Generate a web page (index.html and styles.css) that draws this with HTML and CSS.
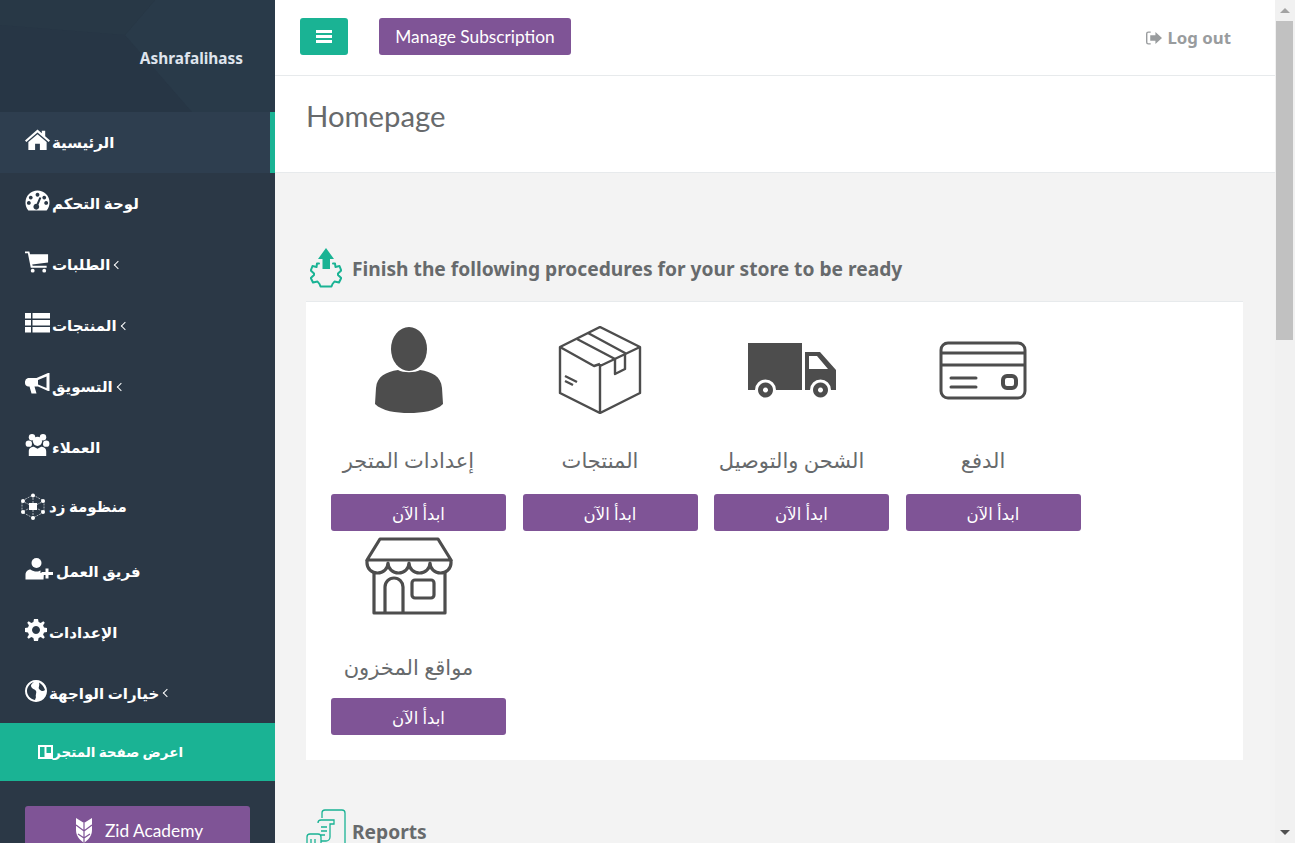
FILE: index.html
```html
<!DOCTYPE html>
<html lang="en">
<head>
  <meta charset="UTF-8" />
  <title>Homepage</title>
  <link rel="stylesheet" href="styles.css">
</head>
<body>
<div class="app">
  <aside class="sidebar">
    <div class="profile">
      <svg class="profile-bg" viewBox="0 0 275 112" preserveAspectRatio="none">
        <polygon points="125,35 155,0 275,0 275,112 192,112" fill="#293a49"/>
        <polygon points="0,0 155,0 125,35 0,25" fill="#283846"/>
      </svg>
      <span class="profile-name">Ashrafalihass</span>
    </div>
    <nav class="menu">
      <a class="menu-item active">
        <svg class="ico" viewBox="0 0 26 22"><path d="M13 0 L17.500 4 V1.500 H21 V7.200 L26 11.600 L24.600 13.200 L13 3.200 L1.400 13.200 L0 11.600Z M13 5 L22.500 13 V21.500 H15.500 V15 H10.500 V21.500 H3.500 V13Z"/></svg>
        <span>الرئيسية</span>
      </a>
      <a class="menu-item">
        <svg class="ico" viewBox="0 0 26 22"><path fill-rule="evenodd" d="M13 0 A12.500 12.500 0 0 1 25.500 12.500 C25.500 15.500 24.500 18.500 22.500 21 H3.500 C1.500 18.500 .5 15.500 .5 12.500 A12.500 12.500 0 0 1 13 0Z M13 2.500 a2 2 0 1 0 .01 0Z M6 5.500 a2 2 0 1 0 .01 0Z M20 5.500 a2 2 0 1 0 .01 0Z M4 11 a2 2 0 1 0 .01 0Z M22 11 a2 2 0 1 0 .01 0Z M15 7 L12 14 a3 3 0 1 0 2 1 L17 7.500Z"/></svg>
        <span>لوحة التحكم</span>
      </a>
      <a class="menu-item">
        <svg class="ico" viewBox="0 0 26 22"><path d="M0 0 H4.500 L5.200 3 H24 V11.500 L7.500 13.500 L8 15 H22.500 V17 H6 L3 2 H0Z"/><circle cx="8" cy="20" r="2"/><circle cx="20" cy="20" r="2"/></svg>
        <span>الطلبات</span><span class="chev"></span>
      </a>
      <a class="menu-item">
        <svg class="ico" viewBox="0 0 25 20"><path d="M0 0 H6 V5.500 H0Z M7.500 0 H25 V5.500 H7.500Z M0 7 H6 V12.500 H0Z M7.500 7 H25 V12.500 H7.500Z M0 14 H6 V19.500 H0Z M7.500 14 H25 V19.500 H7.500Z"/></svg>
        <span>المنتجات</span><span class="chev"></span>
      </a>
      <a class="menu-item">
        <svg class="ico" viewBox="0 0 25 22"><path d="M23 0 H24.500 V18 H23 L13 13.500 H9.500 L11.500 20.500 H6.500 L4.500 13.500 H3 A3.500 3.500 0 0 1 0 10 V8.500 A4 4 0 0 1 3 5 H11.500Z M21.500 3.500 L13 7 V11.500 L21.500 15Z"/></svg>
        <span>التسويق</span><span class="chev"></span>
      </a>
      <a class="menu-item">
        <svg class="ico" viewBox="0 0 26 24"><circle cx="7" cy="3.500" r="3.500"/><circle cx="19" cy="3.500" r="3.500"/><circle cx="13" cy="8" r="5"/><circle cx="3.500" cy="10.500" r="3.500"/><circle cx="22.500" cy="10.500" r="3.500"/><path d="M3.500 24 V19 C3.500 15 7 14 9 14 L13 16 L17 14 C19 14 22.500 15 22.500 19 V24Z"/></svg>
        <span>العملاء</span>
      </a>
      <a class="menu-item menu-item-zid">
        <svg class="ico-zid" viewBox="0 0 26 27">
          <g fill="none" stroke="#a9b0b7" stroke-width="1" stroke-dasharray="2 1"><polygon points="13,2 24,8 24,19 13,25 2,19 2,8"/><path d="M13 2 V25 M2 8 L24 19 M24 8 L2 19"/></g>
          <g fill="#fff"><circle cx="13" cy="2.500" r="2"/><circle cx="3" cy="8" r="2"/><circle cx="23" cy="8" r="2"/><circle cx="3" cy="19" r="2"/><circle cx="23" cy="19" r="2"/><circle cx="13" cy="25" r="2"/><rect x="9" y="10" width="8" height="7"/></g>
        </svg>
        <span>منظومة زد</span>
      </a>
      <a class="menu-item">
        <svg class="ico ico-lg" viewBox="0 0 28 22"><circle cx="11" cy="5" r="5"/><path d="M0 21.500 V17 C0 13 3 11.500 5 11.500 C7 13 9 13.500 11 13.500 C13 13.500 14 13 15 12.500 V15 H18.500 L18 21.500Z"/><path d="M20 10.500 H23 V14 H27.500 V17 H23 V20.500 H20 V17 H16 V14 H20Z"/></svg>
        <span>فريق العمل</span>
      </a>
      <a class="menu-item">
        <svg class="ico ico-sm" viewBox="0 0 22 22"><path fill-rule="evenodd" d="M9 0 H13 L13.600 3 L15.700 3.900 L18.300 2.200 L19.800 3.700 L18.100 6.300 L19 8.400 L22 9 V13 L19 13.600 L18.100 15.700 L19.800 18.300 L18.300 19.800 L15.700 18.100 L13.600 19 L13 22 H9 L8.400 19 L6.300 18.100 L3.700 19.800 L2.200 18.300 L3.900 15.700 L3 13.600 L0 13 V9 L3 8.400 L3.900 6.300 L2.200 3.700 L3.700 2.200 L6.300 3.900 L8.400 3 Z M11 7 a4 4 0 1 0 .01 0Z"/></svg>
        <span>الإعدادات</span>
      </a>
      <a class="menu-item">
        <svg class="ico ico-sm" viewBox="0 0 22 22"><path fill-rule="evenodd" d="M11 0 a11 11 0 1 0 .01 0Z M9 2 C6 4 5 6 7 8 C9 10 10 9 11 11 C12 13 10 15 11 17 L10 20 C5 19 2 15 2 11 C2 7 5 3 9 2Z M14 2.500 C17 4 19 7 20 10 C18 12 16 11 14 9 C13 7 15 6 14 2.500Z"/></svg>
        <span>خيارات الواجهة</span><span class="chev"></span>
      </a>
    </nav>
    <a class="store-link">
      <svg class="ico-store" viewBox="0 0 15 14"><path fill-rule="evenodd" d="M0 0 H15 V14 H0Z M2 2 V12 H6.500 V2Z M8.500 2 V8 H13 V2Z"/></svg>
      <span>اعرض صفحة المتجر</span>
    </a>
    <a class="academy">
      <svg class="academy-logo" viewBox="0 0 16 25"><path d="M0 0 L8 5 L16 0 V12 C16 18 12 22 8 25 C4 22 0 18 0 12Z"/><path class="logo-cut" d="M8 5 V25 M0 7 L8 13 L16 7 M2 16 L8 20 L14 16"/></svg>
      <span>Zid Academy</span>
    </a>
  </aside>

  <main class="main">
    <header class="topbar">
      <button class="btn-menu"><svg class="bars" viewBox="0 0 16 13"><path d="M0 0 H16 V3 H0Z M0 5 H16 V8 H0Z M0 10 H16 V13 H0Z"/></svg></button>
      <a class="btn-purple btn-sub">Manage Subscription</a>
      <a class="logout">
        <svg class="logout-ico" viewBox="0 0 17 14"><path d="M5 0 H2.500 A2.500 2.500 0 0 0 0 2.500 V11.500 A2.500 2.500 0 0 0 2.500 14 H5 V12.500 H2.500 A1 1 0 0 1 1.500 11.500 V2.500 A1 1 0 0 1 2.500 1.500 H5Z M10 .5 L17 7 L10 13.500 V10 H4.500 V4 H10Z"/></svg>
        <span>Log out</span>
      </a>
    </header>
    <section class="page-title"><h1>Homepage</h1></section>

    <div class="content">
      <h2 class="section-head">
        <svg class="head-ico" viewBox="0 0 32 40">
          <path d="M9 15.500 H7 L6.500 19 L2.500 18 L.8 22.500 L4 25.500 V27 L.8 30 L3 34.500 L7.500 33.500 L9.500 36 L10.500 38.500 H21.500 L22.500 36 L24.500 33.500 L29 34.500 L31.200 30 L28 27 V25.500 L31.200 22.500 L29.500 18 L25.500 19 L25 15.500 H23" fill="none" stroke="#1ab394" stroke-width="2" stroke-linejoin="round" stroke-linecap="round"/>
          <path d="M16 0 L24 11 H20 V21 H12.500 V11 H8Z" fill="#1ab394"/>
        </svg>
        <span>Finish the following procedures for your store to be ready</span>
      </h2>

      <div class="card">
        <div class="task">
          <div class="task-icon">
            <svg width="70" height="88" viewBox="0 0 70 88"><ellipse cx="35" cy="23" rx="18" ry="22" fill="#4d4d4d"/><path d="M24 44 C29 47 41 47 46 44 C58 46 67 50 68 62 L69 78 C62 85 48 87 35 87 C22 87 8 85 1 78 L2 62 C3 50 12 46 24 44Z" fill="#4d4d4d"/></svg>
          </div>
          <div class="task-name">إعدادات المتجر</div>
          <a class="btn-purple btn-start">ابدأ الآن</a>
        </div>
        <div class="task">
          <div class="task-icon">
            <svg width="84" height="88" viewBox="0 0 84 88" fill="none" stroke="#4d4d4d" stroke-width="2.400" stroke-linejoin="round"><path d="M2 21 L42 1 L82 21 V67 L42 87 L2 67Z"/><path d="M2 21 L36 40 L42 38 M42 38 V87 M42 40 L82 21"/><path d="M19 13 L57 33 V48 L67 43 V27 L30 7"/><path d="M7 56 L19 62 M7 61 L15 65" transform="translate(0 -6)"/></svg>
          </div>
          <div class="task-name">المنتجات</div>
          <a class="btn-purple btn-start">ابدأ الآن</a>
        </div>
        <div class="task">
          <div class="task-icon task-icon-truck">
            <svg width="90" height="56" viewBox="0 0 90 56" fill="#4d4d4d"><path d="M1 0 H55 V47 H29 A10.500 10.500 0 0 0 8 47 H1Z"/><path fill-rule="evenodd" d="M58 9 H73 L89 27 V47 H84 A10.500 10.500 0 0 0 63 47 H58Z M62 13 V26 H81 L70 13Z"/><path fill-rule="evenodd" d="M18.500 39.500 a7.500 7.500 0 1 0 .01 0Z M18.500 44.500 a2.500 2.500 0 1 1 -.01 0Z M73.500 39.500 a7.500 7.500 0 1 0 .01 0Z M73.500 44.500 a2.500 2.500 0 1 1 -.01 0Z"/></svg>
          </div>
          <div class="task-name">الشحن والتوصيل</div>
          <a class="btn-purple btn-start">ابدأ الآن</a>
        </div>
        <div class="task">
          <div class="task-icon task-icon-card">
            <svg width="88" height="60" viewBox="0 0 88 60" fill="none" stroke="#4d4d4d" stroke-width="3"><rect x="2" y="2" width="84" height="55" rx="7"/><path d="M2 12 H86 M2 24 H86"/><path d="M12 37 H37 M12 46 H37" stroke-linecap="round"/><rect x="64" y="35" width="13" height="12" rx="4" stroke-width="4"/></svg>
          </div>
          <div class="task-name">الدفع</div>
          <a class="btn-purple btn-start">ابدأ الآن</a>
        </div>
        <div class="task">
          <div class="task-icon task-icon-store">
            <svg width="88" height="78" viewBox="0 0 88 78" fill="none" stroke="#4d4d4d" stroke-width="3.200" stroke-linejoin="round"><path d="M15 2 H73 L86 23 H2Z"/><path d="M2 23 V26 A10.500 10 0 0 0 23 26 A10.500 10 0 0 0 44 26 A10.500 10 0 0 0 65 26 A10.500 10 0 0 0 86 26 V23"/><path d="M9 35 V76 H80 V35"/><path d="M20 76 V50 A9 9 0 0 1 38 50 V76"/><rect x="47" y="43" width="22" height="18" rx="3"/></svg>
          </div>
          <div class="task-name">مواقع المخزون</div>
          <a class="btn-purple btn-start">ابدأ الآن</a>
        </div>
      </div>

      <h2 class="section-head section-reports">
        <svg class="head-ico-rep" viewBox="0 0 42 44" fill="none" stroke="#1ab394" stroke-width="1.300"><path d="M17 9 V4 A3 3 0 0 1 20 1 H37 A3 3 0 0 1 40 4 V44"/><path d="M13 14 A3 3 0 0 1 16 11 H29 V15 H25 V28 A4 4 0 0 1 21 32 H16"/><path d="M16 18 H22 M16 22 H22 M16 26 H20"/><path d="M2 44 V28 A3 3 0 0 1 5 25 H13 A3 3 0 0 1 16 28 V44"/><path d="M6 30 V36 M10 30 V36"/></svg>
        <span>Reports</span>
      </h2>
    </div>
  </main>

  <div class="scrollbar">
    <div class="sb-arrow sb-up"></div>
    <div class="sb-track"><div class="sb-thumb"></div></div>
    <div class="sb-arrow sb-down"></div>
  </div>
</div>
</body>
</html>
```

FILE: styles.css
```css
* {
  box-sizing: border-box;
}
html, body {
  margin: 0;
  height: 100%;
  overflow: hidden;
}
body {
  font-family: Lato, "DejaVu Sans", sans-serif;
  color: #676a6c;
  background-color: #f3f3f3;
}
.app {
  display: flex;
  height: 843px;
  overflow: hidden;
}

/* sidebar */
.sidebar {
  width: 275px;
  flex: none;
  background-color: #2b3846;
}
.profile {
  position: relative;
  height: 112px;
  display: flex;
  justify-content: flex-end;
  padding: 49px 32px 0 0;
  background-color: #273645;
}
.profile-bg {
  position: absolute;
  left: 0;
  top: 0;
  width: 100%;
  height: 100%;
}
.profile-name {
  position: relative;
  font-family: "Noto Sans", sans-serif;
  font-size: 15.4px;
  font-weight: 700;
  line-height: 20px;
  color: #dfe4ed;
}
.menu-item {
  display: flex;
  align-items: center;
  height: 61px;
  padding-left: 25px;
  gap: 2px;
  font-size: 15px;
  font-weight: 700;
  color: #fff;
}
.menu-item:last-child {
  height: 60px;
}
.menu-item.active {
  background-color: #2e3e4f;
  border-right: 5px solid #1ab394;
}
.menu-item-zid {
  height: 63px;
  padding-left: 20px;
  padding-bottom: 6px;
}
.ico {
  width: 25px;
  height: 22px;
  fill: #fff;
  margin-top: -5px;
}
.ico-sm {
  width: 22px;
}
.ico-lg {
  width: 29px;
}
.ico-zid {
  width: 26px;
  height: 27px;
  margin-right: 1px;
}
.chev {
  width: 6px;
  height: 6px;
  margin-left: 3px;
  border-left: 1.5px solid #fff;
  border-bottom: 1.5px solid #fff;
  transform: rotate(45deg);
}
.store-link {
  display: flex;
  align-items: center;
  height: 58px;
  padding-left: 38px;
  background-color: #1ab394;
  font-size: 13.5px;
  font-weight: 700;
  color: #fff;
}
.ico-store {
  width: 15px;
  height: 14px;
  fill: #fff;
}
.academy {
  display: flex;
  align-items: center;
  gap: 13px;
  height: 48px;
  margin: 25px 25px 0;
  padding-left: 51px;
  border-radius: 3px;
  background-color: #7f5496;
  color: #fff;
  font-size: 17.3px;
}
.academy-logo {
  width: 16px;
  height: 25px;
  fill: #fff;
}
.logo-cut {
  fill: none;
  stroke: #7f5496;
  stroke-width: 1.2;
}

/* main column */
.main {
  flex: 1;
  min-width: 0;
}
.topbar {
  display: flex;
  align-items: center;
  height: 76px;
  padding: 0 44px 2px 25px;
  background-color: #fff;
  border-bottom: 1px solid #e7eaec;
}
.btn-menu {
  width: 48px;
  height: 37px;
  padding: 0;
  border: 0;
  border-radius: 3px;
  background-color: #1ab394;
  display: flex;
  align-items: center;
  justify-content: center;
}
.bars {
  width: 16px;
  height: 13px;
  fill: #fff;
}
.btn-purple {
  display: flex;
  align-items: center;
  justify-content: center;
  height: 37px;
  border-radius: 3px;
  background-color: #7f5496;
  color: #fff;
}
.btn-sub {
  width: 192px;
  margin-left: 31px;
  font-size: 17.3px;
}
.logout {
  margin-left: auto;
  margin-top: 2px;
  display: flex;
  align-items: center;
  gap: 5px;
  font-family: "Noto Sans", sans-serif;
  font-size: 16.8px;
  font-weight: 700;
  color: #999c9e;
}
.logout-ico {
  width: 16px;
  height: 14px;
  fill: #999c9e;
}
.page-title {
  height: 97px;
  padding: 20px 31px 0;
  background-color: #fff;
  border-bottom: 1px solid #e7eaec;
}
.page-title h1 {
  margin: 0;
  font-size: 29.3px;
  font-weight: 400;
  line-height: 40px;
}
.content {
  padding: 75px 32px 0 31px;
}
.section-head {
  display: flex;
  align-items: center;
  gap: 10px;
  height: 40px;
  margin: 0 0 13px;
  font-family: "Noto Sans", sans-serif;
  font-size: 19.2px;
  font-weight: 700;
}
.head-ico {
  width: 32px;
  height: 40px;
  margin-left: 4px;
}
.head-ico-rep {
  width: 42px;
  height: 44px;
  margin-left: -1px;
  margin-right: -5px;
  flex: none;
}
.section-reports {
  margin-top: 51px;
}

/* task card */
.card {
  display: grid;
  grid-template-columns: repeat(4, 175px);
  column-gap: 16.5px;
  padding: 0 25px 25px;
  background-color: #fff;
  border-top: 1px solid #e7eaec;
}
.task {
  display: flex;
  flex-direction: column;
}
.task-icon {
  display: flex;
  justify-content: center;
  width: 155px;
  height: 138px;
  padding-top: 24px;
}
.task-icon svg {
  flex: none;
}
.task-icon-truck {
  padding-top: 41px;
}
.task-icon-card {
  padding-top: 39px;
}
.task-icon-store {
  height: 116px;
  padding-top: 6px;
}
.task-name {
  width: 155px;
  height: 54px;
  font-size: 21px;
  line-height: 40px;
  text-align: center;
  white-space: nowrap;
}
.task-icon-store + .task-name {
  height: 51px;
}
.btn-start {
  width: 175px;
  padding-top: 3px;
  font-size: 16.5px;
}

/* page scrollbar */
.scrollbar {
  width: 20px;
  flex: none;
  display: flex;
  flex-direction: column;
  background-color: #f1f1f1;
}
.sb-arrow {
  height: 21px;
  display: flex;
  align-items: center;
  justify-content: center;
}
.sb-up::before {
  content: "";
  border: 5px solid transparent;
  border-top: 0;
  border-bottom: 5px solid #a3a3a3;
}
.sb-down::before {
  content: "";
  border: 5px solid transparent;
  border-bottom: 0;
  border-top: 5px solid #505050;
}
.sb-track {
  flex: 1;
  padding: 0 2px 0 1px;
}
.sb-thumb {
  height: 319px;
  background-color: #c1c1c1;
}
```
